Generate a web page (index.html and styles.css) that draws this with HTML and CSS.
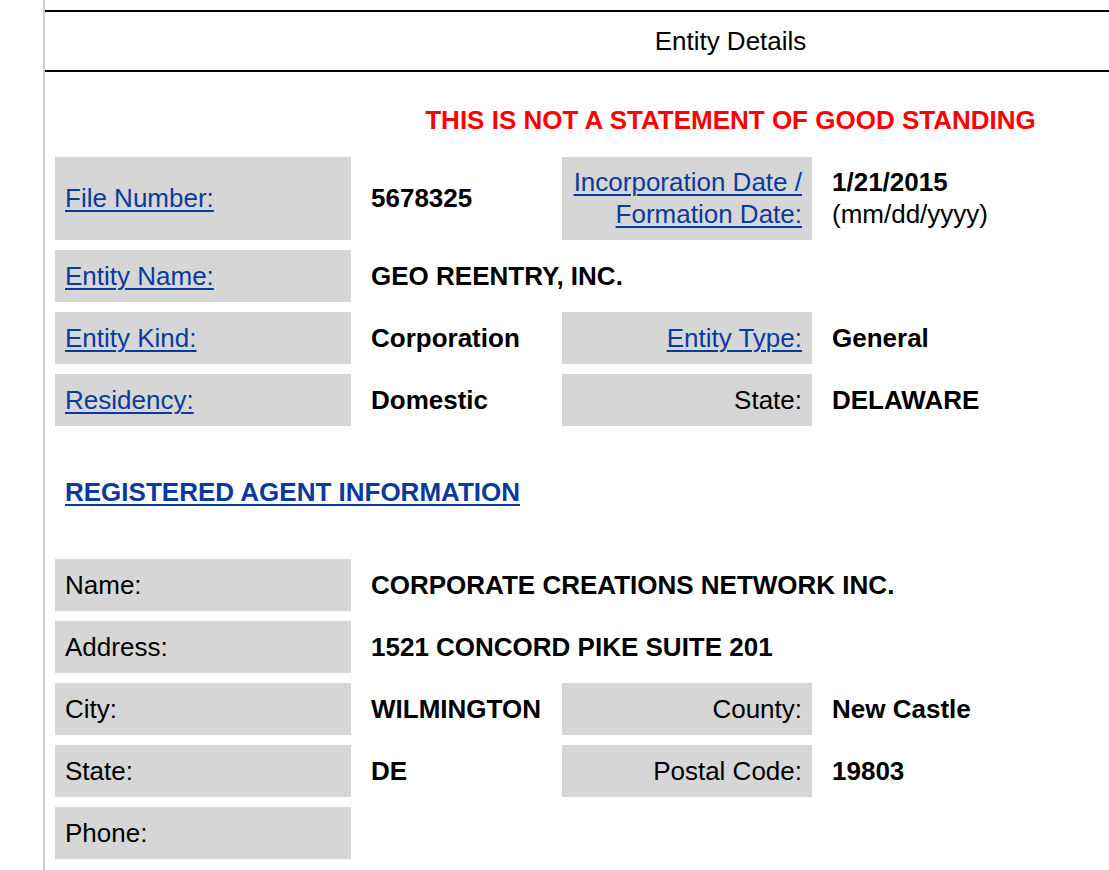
FILE: index.html
```html
<!DOCTYPE html>
<html lang="en">
<head>
<meta charset="utf-8">
<title>Entity Details</title>
<link rel="stylesheet" href="styles.css">
</head>
<body>
<div class="page">
  <div class="header">Entity Details</div>
  <p class="warning">THIS IS NOT A STATEMENT OF GOOD STANDING</p>
  <table class="details">
    <colgroup><col class="c1"><col class="c2"><col class="c3"><col class="c4"></colgroup>
    <tr class="tall">
      <td class="label"><a href="#">File Number:</a></td>
      <td class="value">5678325</td>
      <td class="label right"><a href="#">Incorporation Date /<br>Formation Date:</a></td>
      <td class="value top">1/21/2015<br><span class="normal">(mm/dd/yyyy)</span></td>
    </tr>
    <tr>
      <td class="label"><a href="#">Entity Name:</a></td>
      <td class="value" colspan="3">GEO REENTRY, INC.</td>
    </tr>
    <tr>
      <td class="label"><a href="#">Entity Kind:</a></td>
      <td class="value">Corporation</td>
      <td class="label right"><a href="#">Entity Type:</a></td>
      <td class="value">General</td>
    </tr>
    <tr>
      <td class="label"><a href="#">Residency:</a></td>
      <td class="value">Domestic</td>
      <td class="label right">State:</td>
      <td class="value">DELAWARE</td>
    </tr>
  </table>
  <h2 class="section"><a href="#">REGISTERED AGENT INFORMATION</a></h2>
  <table class="details agent">
    <colgroup><col class="c1"><col class="c2"><col class="c3"><col class="c4"></colgroup>
    <tr>
      <td class="label">Name:</td>
      <td class="value" colspan="3">CORPORATE CREATIONS NETWORK INC.</td>
    </tr>
    <tr>
      <td class="label">Address:</td>
      <td class="value" colspan="3">1521 CONCORD PIKE SUITE 201</td>
    </tr>
    <tr>
      <td class="label">City:</td>
      <td class="value">WILMINGTON</td>
      <td class="label right">County:</td>
      <td class="value">New Castle</td>
    </tr>
    <tr>
      <td class="label">State:</td>
      <td class="value">DE</td>
      <td class="label right">Postal Code:</td>
      <td class="value">19803</td>
    </tr>
    <tr>
      <td class="label">Phone:</td>
      <td class="value"></td>
      <td class="blank"></td>
      <td class="blank"></td>
    </tr>
  </table>
</div>
</body>
</html>
```

FILE: styles.css
```css
html, body {
  margin: 0;
  padding: 0;
  overflow: hidden;
  background: #fff;
}
body {
  font-family: "Liberation Sans", Arial, Helvetica, sans-serif;
  font-size: 26px;
  line-height: 32px;
  color: #000;
}
.page {
  margin-left: 43px;
  border-left: 2px solid #cccccc;
  width: 1371px;
  min-height: 870px;
  padding-top: 10px;
}
.header {
  border-top: 2px solid #000;
  border-bottom: 2px solid #000;
  height: 58px;
  line-height: 58px;
  text-align: center;
}
.warning {
  margin: 32px 0 0;
  height: 32px;
  text-align: center;
  color: #ff0000;
  font-weight: bold;
}
.details {
  table-layout: fixed;
  width: 1371px;
  border-collapse: separate;
  border-spacing: 10px;
  margin-top: 11px;
}
.details col.c1 { width: 296px; }
.details col.c2 { width: 191px; }
.details col.c3 { width: 250px; }
.details td {
  padding: 10px;
  vertical-align: middle;
  white-space: nowrap;
}
.details tr.tall td {
  line-height: 31.5px;
}
.details td.label {
  background: #d6d6d6;
  text-align: left;
}
.details td.label.right {
  text-align: right;
}
.details td.value {
  font-weight: bold;
}
.details td.value.top {
  vertical-align: top;
}
.normal {
  font-weight: normal;
}
a {
  color: #0a3a9e;
  text-decoration: underline;
  text-decoration-thickness: 2px;
  text-underline-offset: 3px;
}
.section {
  margin: 40px 0 0 20px;
  font-size: 26px;
  line-height: 32px;
  font-weight: bold;
}
.agent {
  margin-top: 41px;
}
```
